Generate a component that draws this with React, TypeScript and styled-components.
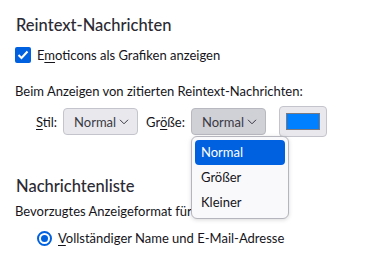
import styled, { createGlobalStyle } from "styled-components"

const Global = createGlobalStyle`
  html, body {
    margin: 0;
    background: #ffffff;
  }
  body {
    font-family: "Lato", "Noto Sans", sans-serif;
    font-size: 13px;
    color: #15141a;
  }
`

const Page = styled.div`
  width: 385px;
  height: 261px;
  overflow: hidden;
  padding: 14px 0 0 15px;
  box-sizing: border-box;
`

const Heading = styled.h2<{ $top?: number }>`
  margin: ${p => p.$top ?? 0}px 0 0 1px;
  font-size: 16.5px;
  font-weight: 500;
  line-height: 22px;
  color: #2b2a33;
`

const Line = styled.div<{ $top?: number; $indent?: number }>`
  display: flex;
  align-items: center;
  margin-top: ${p => p.$top ?? 0}px;
  padding-left: ${p => p.$indent ?? 0}px;
  line-height: 18px;
`

const Key = styled.span`
  text-decoration: underline;
  text-underline-offset: 2px;
`

const CheckBox = styled.span`
  width: 16px;
  height: 16px;
  border-radius: 2px;
  background: #0061e0;
  display: inline-flex;
  align-items: center;
  justify-content: center;
  margin-right: 6px;
`

const Radio = styled.span`
  width: 15px;
  height: 15px;
  border-radius: 50%;
  border: 2px solid #0061e0;
  box-sizing: border-box;
  display: inline-flex;
  align-items: center;
  justify-content: center;
  margin-right: 6px;
  &::after {
    content: "";
    width: 7px;
    height: 7px;
    border-radius: 50%;
    background: #0061e0;
  }
`

const Controls = styled.div`
  display: flex;
  align-items: center;
  margin-top: 6px;
  padding-left: 21px;
  height: 31px;
`

const Label = styled.span`
  margin-right: 6px;
`

const SelectWrap = styled.div`
  position: relative;
  margin-right: 8px;
`

const Select = styled.div<{ $open?: boolean }>`
  width: 75px;
  height: 27px;
  box-sizing: border-box;
  border: 1px solid ${p => (p.$open ? "#b8b8c0" : "#c4c4cc")};
  border-radius: 4px;
  background: ${p => (p.$open ? "#d0d0d7" : "#e9e9ed")};
  display: flex;
  align-items: center;
  padding: 0 5px 0 10px;
  gap: 3px;
  color: #3a3944;
`

const ColorButton = styled.div`
  width: 48px;
  height: 31px;
  box-sizing: border-box;
  border: 1px solid #c4c4cc;
  border-radius: 4px;
  background: #e9e9ed;
  margin-left: 5px;
  display: flex;
  align-items: center;
  justify-content: center;
`

const Swatch = styled.div`
  width: 34px;
  height: 17px;
  box-sizing: border-box;
  border: 1px solid #7a7a80;
  background: #0080ff;
`

const Popup = styled.div`
  position: absolute;
  left: 0;
  top: 28px;
  width: 98px;
  box-sizing: border-box;
  padding: 3px;
  background: #f9f9fb;
  border: 1px solid #b5b5bd;
  border-radius: 6px;
  box-shadow: 0 1px 4px rgba(0, 0, 0, 0.15);
  z-index: 2;
`

const Option = styled.div<{ $selected?: boolean }>`
  height: 25px;
  line-height: 25px;
  padding-left: 6px;
  border-radius: 4px;
  background: ${p => (p.$selected ? "#0061e0" : "transparent")};
  color: ${p => (p.$selected ? "#ffffff" : "#15141a")};
`

function Chevron() {
  return (
    <svg width="10" height="6" viewBox="0 0 10 6">
      <path d="M1 0.8 L5 4.8 L9 0.8" fill="none" stroke="#3a3944" strokeWidth="1" />
    </svg>
  )
}

export default function App() {
  return (
    <>
      <Global />
      <Page>
        <Heading>Reintext-Nachrichten</Heading>
        <Line $top={10}>
          <CheckBox>
            <svg width="12" height="10" viewBox="0 0 12 10">
              <path d="M1.5 5 L4.5 8 L10.5 1.5" fill="none" stroke="#fff" strokeWidth="2" />
            </svg>
          </CheckBox>
          <span>E<Key>m</Key>oticons als Grafiken anzeigen</span>
        </Line>
        <Line $top={18}>Beim Anzeigen von zitierten Reintext-Nachrichten:</Line>
        <Controls>
          <Label><Key>S</Key>til:</Label>
          <SelectWrap>
            <Select>Normal<Chevron /></Select>
          </SelectWrap>
          <Label>Gr<Key>ö</Key>ße:</Label>
          <SelectWrap>
            <Select $open>Normal<Chevron /></Select>
            <Popup>
              <Option $selected>Normal</Option>
              <Option>Größer</Option>
              <Option>Kleiner</Option>
            </Popup>
          </SelectWrap>
          <ColorButton>
            <Swatch />
          </ColorButton>
        </Controls>
        <Heading $top={38}>Nachrichtenliste</Heading>
        <Line $top={5}>Bevorzugtes Anzeigeformat für Absender:</Line>
        <Line $top={9} $indent={22}>
          <Radio />
          <span><Key>V</Key>ollständiger Name und E-Mail-Adresse</span>
        </Line>
      </Page>
    </>
  )
}
